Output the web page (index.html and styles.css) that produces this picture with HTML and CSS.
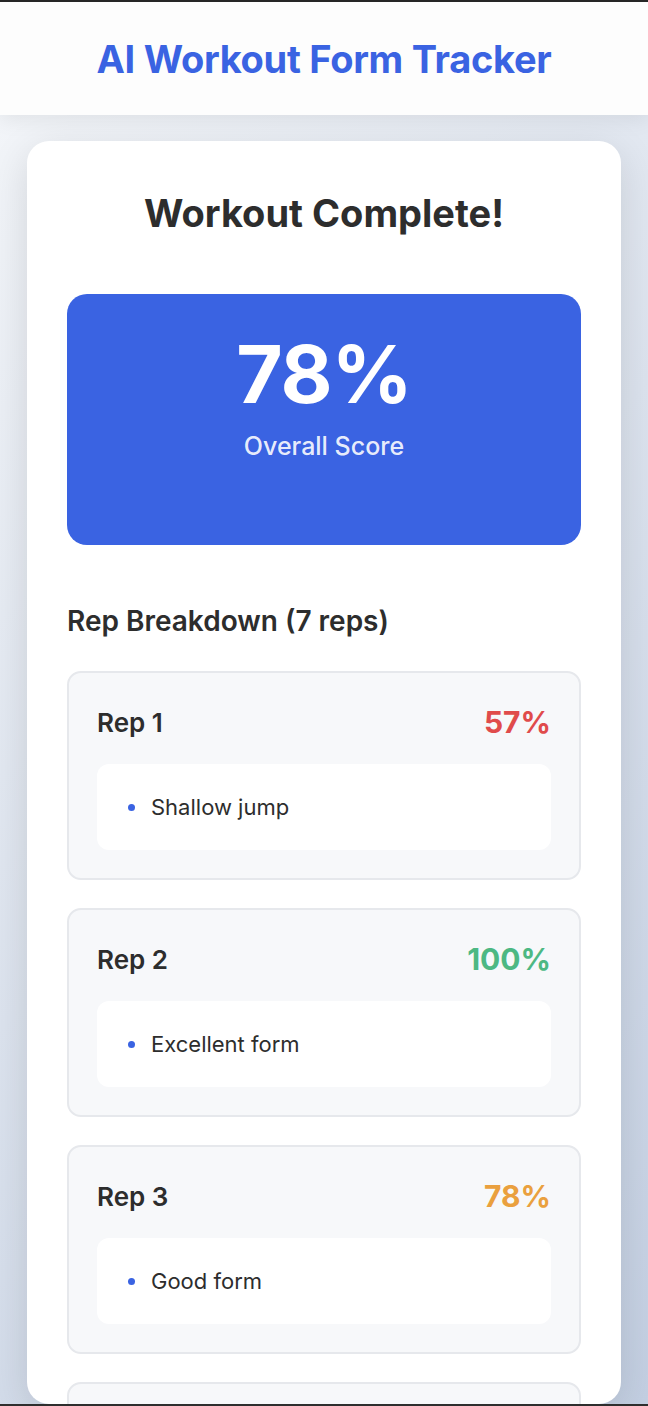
FILE: index.html
```html
<!DOCTYPE html>
<html lang="en">
<head>
<meta charset="utf-8">
<title>AI Workout Form Tracker</title>
<link rel="stylesheet" href="styles.css">
</head>
<body>
<div class="frame">
  <header class="app-header">
    <h1 class="app-title">AI Workout Form Tracker</h1>
  </header>
  <main class="main">
    <section class="results-card">
      <h2 class="results-title">Workout Complete!</h2>
      <div class="score-box">
        <div class="score-value">78%</div>
        <div class="score-label">Overall Score</div>
      </div>
      <h3 class="breakdown-title">Rep Breakdown (7 reps)</h3>
      <div class="rep-list">
        <div class="rep-card">
          <div class="rep-head">
            <span class="rep-name">Rep 1</span>
            <span class="rep-score score-bad">57%</span>
          </div>
          <ul class="rep-notes">
            <li class="rep-note"><span class="dot"></span>Shallow jump</li>
          </ul>
        </div>
        <div class="rep-card">
          <div class="rep-head">
            <span class="rep-name">Rep 2</span>
            <span class="rep-score score-great">100%</span>
          </div>
          <ul class="rep-notes">
            <li class="rep-note"><span class="dot"></span>Excellent form</li>
          </ul>
        </div>
        <div class="rep-card">
          <div class="rep-head">
            <span class="rep-name">Rep 3</span>
            <span class="rep-score score-ok">78%</span>
          </div>
          <ul class="rep-notes">
            <li class="rep-note"><span class="dot"></span>Good form</li>
          </ul>
        </div>
        <div class="rep-card rep-card-clipped"></div>
      </div>
    </section>
  </main>
</div>
</body>
</html>
```
FILE: styles.css
```css
* { box-sizing: border-box; }
html, body { margin: 0; padding: 0; }
body {
  font-family: Inter, "Noto Sans", "Liberation Sans", sans-serif;
  color: #2f2f2f;
  background: #2a2a2a;
}
.frame {
  height: 1406px;
  overflow: hidden;
  border-top: 2px solid #262626;
  border-bottom: 2px solid #2e2e2e;
  background: linear-gradient(135deg, #f5f7fa 0%, #c3cfe2 100%);
  display: flex;
  flex-direction: column;
}
.app-header {
  height: 113px;
  flex: none;
  background: #fdfdfd;
  box-shadow: 0 4px 20px rgba(0, 0, 0, 0.08);
  display: flex;
  align-items: center;
  justify-content: center;
  position: relative;
  z-index: 1;
}
.app-title {
  margin: 0;
  font-size: 38px;
  font-weight: 700;
  color: #3a63e2;
  letter-spacing: -0.3px;
}
.main {
  flex: 1;
  min-height: 0;
  padding: 26px 27px 0;
  display: flex;
  flex-direction: column;
}
.results-card {
  flex: 1;
  min-height: 0;
  background: #fff;
  border-radius: 22px;
  box-shadow: 0 10px 40px rgba(0, 0, 0, 0.12);
  padding: 48px 40px 0;
  overflow: hidden;
}
.results-title {
  margin: 0 0 57px;
  text-align: center;
  font-size: 38px;
  line-height: 48px;
  font-weight: 700;
  color: #2d2d2d;
}
.score-box {
  background: #3a63e2;
  border-radius: 20px;
  padding: 32px 40px 81px;
  text-align: center;
  color: #fff;
}
.score-value {
  font-size: 80px;
  line-height: 96px;
  font-weight: 700;
  letter-spacing: -1px;
}
.score-label {
  margin-top: 6px;
  font-size: 25px;
  line-height: 36px;
  font-weight: 500;
  color: rgba(255, 255, 255, 0.9);
}
.breakdown-title {
  margin: 57px 0 30px;
  font-size: 28px;
  line-height: 39px;
  font-weight: 600;
  color: #2d2d2d;
}
.rep-list {
  display: flex;
  flex-direction: column;
  gap: 28px;
}
.rep-card {
  background: #f7f8fa;
  border: 2px solid #e6e8ec;
  border-radius: 14px;
  padding: 28px;
}
.rep-card-clipped {
  height: 209px;
}
.rep-head {
  height: 42px;
  display: flex;
  align-items: center;
  justify-content: space-between;
  margin-bottom: 21px;
}
.rep-name {
  font-size: 26px;
  font-weight: 600;
  color: #2d2d2d;
}
.rep-score {
  font-size: 30px;
  font-weight: 700;
}
.score-bad { color: #e04b4b; }
.score-great { color: #4db883; }
.score-ok { color: #eaa03e; }
.rep-notes {
  list-style: none;
  margin: 0;
  background: #fff;
  border-radius: 12px;
  padding: 28px 28px 28px 31px;
}
.rep-note {
  display: flex;
  align-items: center;
  gap: 16px;
  font-size: 22px;
  line-height: 30px;
  color: #2d2d2d;
}
.dot {
  width: 7px;
  height: 7px;
  border-radius: 50%;
  background: #3a63e2;
  flex: none;
}
```
